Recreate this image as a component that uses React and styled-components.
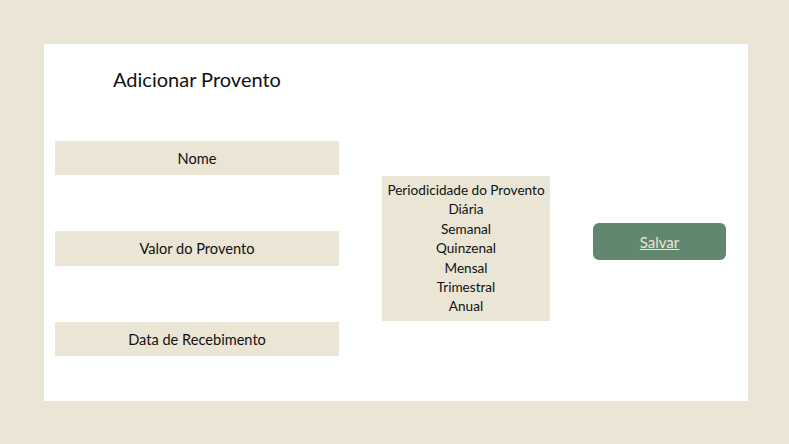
import React from 'react'
import styled, { createGlobalStyle } from 'styled-components'

const Global = createGlobalStyle`
    html, body {
        margin: 0;
        padding: 0;
        background: #ebe5d5;
        font-family: Lato, "Open Sans", sans-serif;
        color: #111;
    }
`

const periods = ['Diária', 'Semanal', 'Quinzenal', 'Mensal', 'Trimestral', 'Anual']

export default function App() {
    return (
        <>
            <Global />
            <Page>
                <Card>
                    <Title>Adicionar Provento</Title>
                    <Row>
                        <Fields>
                            <Field placeholder="Nome" />
                            <Field placeholder="Valor do Provento" />
                            <Field placeholder="Data de Recebimento" />
                        </Fields>
                        <Periods>
                            <Option>Periodicidade do Provento</Option>
                            {periods.map(p => (
                                <Option key={p}>{p}</Option>
                            ))}
                        </Periods>
                        <Button>Salvar</Button>
                    </Row>
                </Card>
            </Page>
        </>
    )
}

const Page = styled.div`
    width: 789px;
    height: 444px;
    padding: 44px 41px 43px 44px;
    box-sizing: border-box;
`
const Card = styled.section`
    background: #fff;
    height: 357px;
    box-sizing: border-box;
    padding: 23px 22px 0 11px;
    display: flex;
    flex-direction: column;
`
const Title = styled.h1`
    width: 284px;
    margin: 0;
    font-size: 20px;
    line-height: 24px;
    font-weight: 400;
    text-align: center;
`
const Row = styled.div`
    margin-top: 50px;
    display: flex;
    align-items: center;
    gap: 43px;
`
const Fields = styled.div`
    width: 284px;
    display: flex;
    flex-direction: column;
    gap: 56px;
`
const Field = styled.input`
    height: 34px;
    border: none;
    outline: none;
    margin: 0;
    padding: 0;
    background: #ebe5d5;
    font-family: inherit;
    font-size: 14.6px;
    text-align: center;
    color: #111;
    &::placeholder {
        color: #111;
    }
    &:nth-child(2) {
        height: 35px;
    }
`
const Periods = styled.div`
    width: 168px;
    height: 145px;
    box-sizing: border-box;
    padding-top: 5px;
    background: #ebe5d5;
    display: flex;
    flex-direction: column;
    align-items: center;
`
const Option = styled.div`
    font-size: 13.6px;
    line-height: 19.4px;
`
const Button = styled.button`
    width: 133px;
    height: 37px;
    margin-bottom: 14px;
    border: none;
    border-radius: 6px;
    background: #61876f;
    color: #ece6d6;
    font-family: inherit;
    font-size: 15px;
    text-decoration: underline;
    cursor: pointer;
`
